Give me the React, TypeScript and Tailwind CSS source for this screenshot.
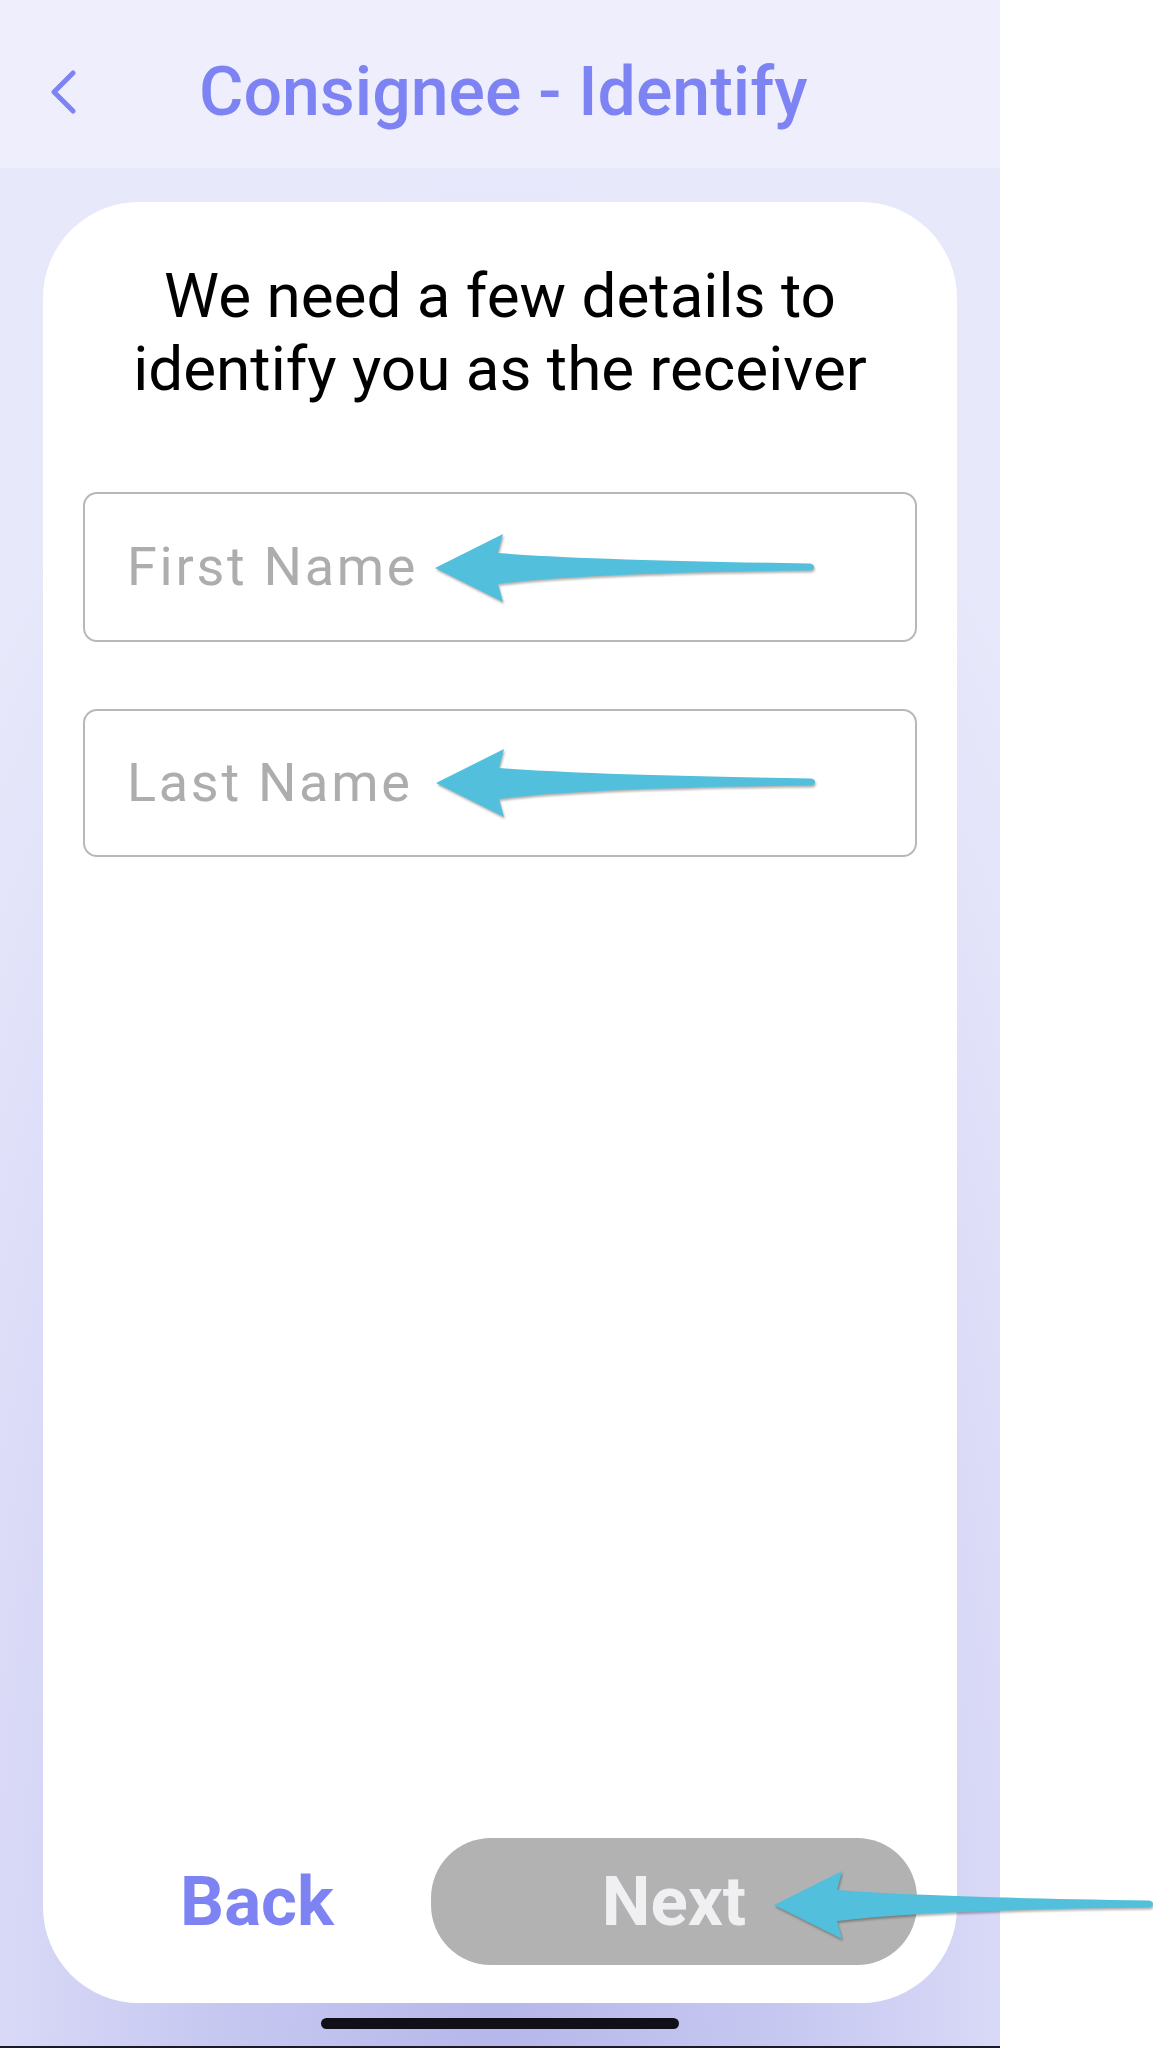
import React from 'react';

// annotation arrow, tip on the left, tail running right
function Arrow({ left, top }: { left: number; top: number }) {
  return (
    <svg
      className="absolute drop-shadow-[1px_2px_1px_rgba(0,0,0,0.3)]"
      style={{ left, top }}
      width="382"
      height="70"
      viewBox="0 0 382 70"
    >
      <path
        d="M0 34 L68 0 L63 19 Q150 26 375 29.5 Q379 30 379 33 Q379 36 375 36.5 Q150 39 63 50 L68 68 Z"
        fill="#52bfdc"
      />
    </svg>
  );
}

function Field({ label, className }: { label: string; className: string }) {
  return (
    <div
      className={`mx-[40px] flex items-center rounded-[14px] border-2 border-[#b8b8b8] pl-[42px] ${className}`}
    >
      <span className="text-[54px] leading-none tracking-[0.05em] text-[#adadad]">{label}</span>
    </div>
  );
}

export default function App() {
  return (
    <div className="relative flex h-[2048px] w-[1153px] bg-white font-['Roboto','Liberation_Sans',sans-serif]">
      <div className="flex h-[2048px] w-[1000px] flex-col">
        {/* top bar */}
        <div className="flex h-[168px] items-center bg-[#eeeefd] pl-[50px] pt-[16px]">
          <svg width="28" height="44" viewBox="0 0 28 44" className="mr-[121px]">
            <polyline
              points="23,3 4,22 23,41"
              fill="none"
              stroke="#7e83f4"
              strokeWidth="5"
              strokeLinecap="round"
              strokeLinejoin="round"
            />
          </svg>
          <h1 className="text-[68px] font-medium leading-none text-[#7e83f4]">Consignee - Identify</h1>
        </div>

        {/* body */}
        <div className="flex flex-1 flex-col items-center bg-[radial-gradient(ellipse_75%_100%_at_50%_100%,#b6b7ea_0%,#c8c9f1_40%,#dbdbf8_70%,#e8e8fb_100%)]">
          <div className="mt-[34px] flex h-[1801px] w-[914px] flex-col rounded-[96px] bg-white pt-[57px]">
            <p className="text-center text-[62px] leading-[73px] text-black">
              We need a few details to
              <br />
              identify you as the receiver
            </p>

            <Field label="First Name" className="mt-[87px] h-[150px]" />
            <Field label="Last Name" className="mt-[67px] h-[148px]" />

            <div className="flex-1" />

            <div className="flex items-center px-[40px] pb-[38px]">
              <button className="flex-1 text-center text-[69px] font-bold leading-none text-[#7e83f4]">Back</button>
              <button className="flex h-[127px] w-[486px] items-center justify-center rounded-[60px] bg-[#b2b2b3] text-[69px] font-bold leading-none text-[#f0eff1]">
                Next
              </button>
            </div>
          </div>

          <div className="mt-[15px] h-[11px] w-[358px] rounded-full bg-[#111018]" />
          <div className="flex-1" />
          <div className="h-[2px] w-full bg-[#1c1a2a]" />
        </div>
      </div>

      <Arrow left={435} top={534} />
      <Arrow left={436} top={749} />
      <Arrow left={774} top={1871} />
    </div>
  );
}
